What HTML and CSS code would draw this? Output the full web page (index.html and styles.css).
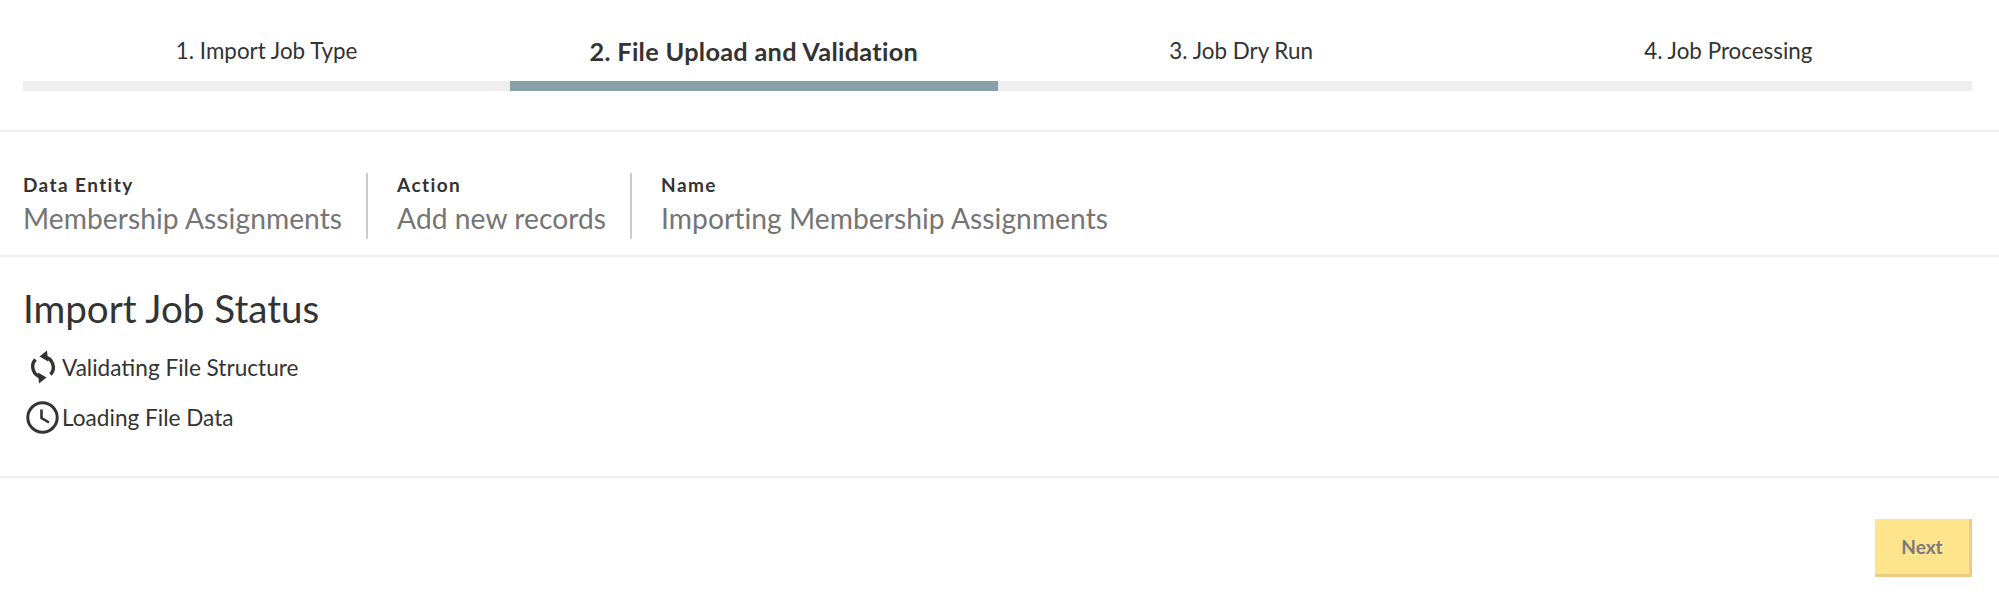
FILE: index.html
```html
<!DOCTYPE html>
<html lang="en">
<head>
    <meta charset="UTF-8">
    <meta name="viewport" content="width=device-width, initial-scale=1.0">
    <title>Import Job</title>
    <link rel="stylesheet" href="styles.css">
</head>
<body>
    <div class="steps">
        <div class="step">1. Import Job Type</div>
        <div class="step active">2. File Upload and Validation</div>
        <div class="step">3. Job Dry Run</div>
        <div class="step">4. Job Processing</div>
    </div>

    <div class="summary">
        <div class="field">
            <div class="field-label">Data Entity</div>
            <div class="field-value">Membership Assignments</div>
        </div>
        <div class="field">
            <div class="field-label">Action</div>
            <div class="field-value">Add new records</div>
        </div>
        <div class="field">
            <div class="field-label">Name</div>
            <div class="field-value">Importing Membership Assignments</div>
        </div>
    </div>

    <div class="status">
        <h1>Import Job Status</h1>
        <div class="status-row">
            <span class="status-icon">
                <svg width="28" height="34" viewBox="0 0 28 34">
                    <g fill="none" stroke="#333" stroke-width="3.4">
                        <path d="M21.5 24.5A10.5 10.5 0 0 0 15.5 7"/>
                        <path d="M6.5 9.5A10.5 10.5 0 0 0 12.5 27"/>
                    </g>
                    <path d="M18 0.5L10.5 6.5L19 11.5Z" fill="#333"/>
                    <path d="M10 33.5L17.5 27.5L9 22.5Z" fill="#333"/>
                </svg>
            </span>
            Validating File Structure
        </div>
        <div class="status-row">
            <span class="status-icon">
                <svg width="33" height="33" viewBox="0 0 33 33">
                    <circle cx="16.5" cy="16.5" r="14.7" fill="none" stroke="#333" stroke-width="3"/>
                    <path d="M15.5 8.5V17L23 21.5" fill="none" stroke="#333" stroke-width="2.6"/>
                </svg>
            </span>
            Loading File Data
        </div>
    </div>

    <div class="footer">
        <button class="next">Next</button>
    </div>
</body>
</html>
```
FILE: styles.css
```css
body {
    margin: 0;
    background: white;
    color: #333;
    font-family: Lato, "Liberation Sans", sans-serif;
}
.steps {
    display: grid;
    grid-template-columns: repeat(4, 1fr);
    padding: 0 27px 39px 23px;
    border-bottom: 2px solid #eee;
    height: 91px;
}
.step {
    height: 81px;
    line-height: 102px;
    text-align: center;
    font-size: 22.4px;
    border-bottom: 10px solid #eee;
}
.active {
    font-size: 25.3px;
    letter-spacing: 0.3px;
    font-weight: bold;
    border-bottom-color: #87a1a8;
}
.summary {
    display: flex;
    padding: 41px 0 16px 23px;
    border-bottom: 2px solid #eee;
}
.field {
    height: 66px;
    padding-right: 24px;
    margin-right: 29px;
    border-right: 2px solid #ccc;
}
.field:last-child {
    border-right: none;
}
.field-label {
    font-size: 19px;
    font-weight: bold;
    letter-spacing: 1.4px;
    line-height: 24px;
}
.field-value {
    margin-top: 3px;
    font-size: 28.2px;
    letter-spacing: 0.05px;
    line-height: 36px;
    color: #757575;
}
.status {
    padding: 28px 0 34px 23px;
    border-bottom: 2px solid #eee;
}
h1 {
    margin: 0 0 11px;
    font-size: 38.6px;
    font-weight: normal;
    line-height: 46px;
}
.status-row {
    display: flex;
    align-items: center;
    height: 50px;
    font-size: 22.6px;
}
.status-icon {
    display: flex;
    justify-content: center;
    width: 39px;
}
.footer {
    display: flex;
    justify-content: flex-end;
    padding: 41px 27px 0 0;
}
.next {
    width: 97px;
    height: 58px;
    font-family: inherit;
    font-size: 19px;
    font-weight: bold;
    color: #7b7b7b;
    background: #fde48d;
    border: none;
    border-right: 3px solid #eecb85;
    border-bottom: 3px solid #eecb85;
}
```
